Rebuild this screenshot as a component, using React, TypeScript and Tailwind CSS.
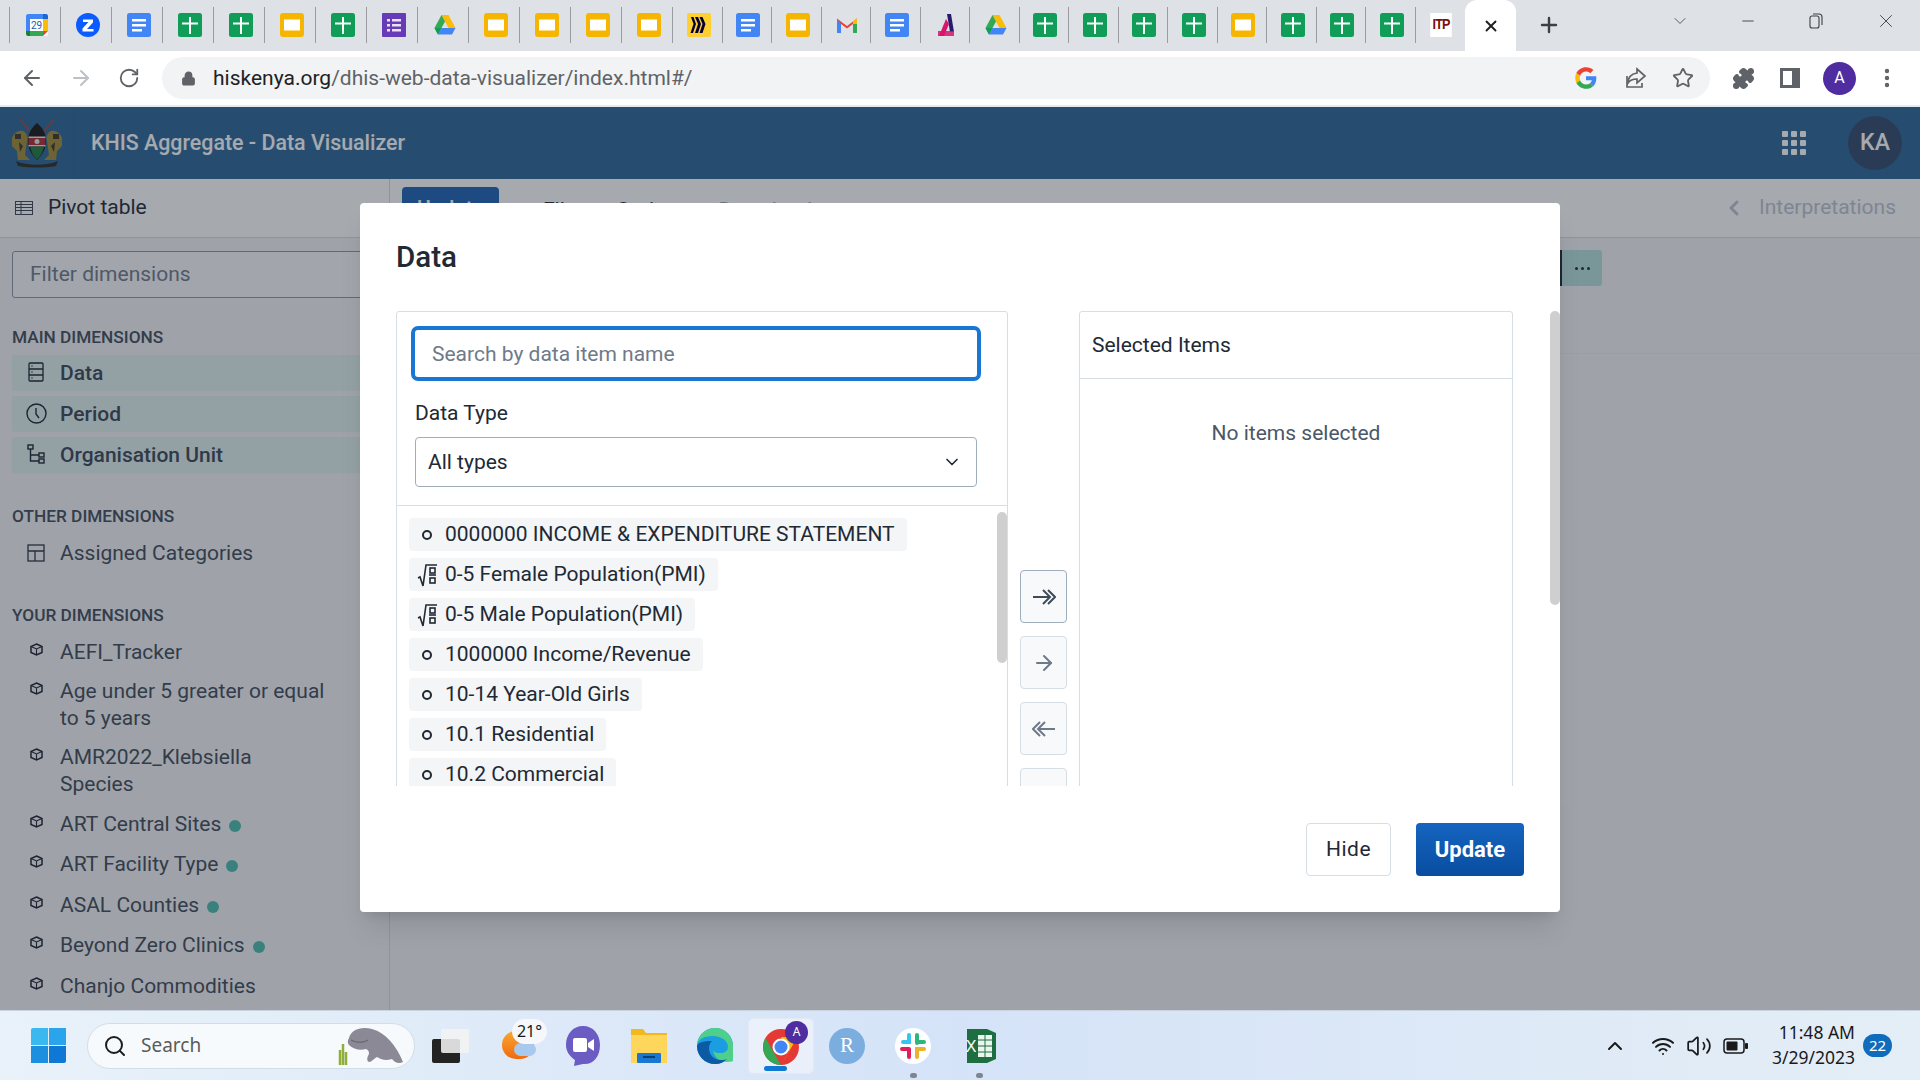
import { ArrowLeft, ArrowRight, RotateCw, Lock, Star, Puzzle, X, Plus, ChevronDown, ChevronUp, ChevronLeft, Minus, Search, MoreVertical, Wifi, Volume2 } from "lucide-react";

type Fav = "cal" | "z" | "doc" | "sheet" | "slide" | "form" | "drive" | "miro" | "gmail" | "lambda" | "itp";

const tabs: Fav[] = [
  "cal", "z", "doc", "sheet", "sheet", "slide", "sheet", "form", "drive", "slide", "slide", "slide", "slide", "miro", "doc",
  "slide", "gmail", "doc", "lambda", "drive", "sheet", "sheet", "sheet", "sheet", "slide", "sheet", "sheet", "sheet", "itp",
];

function Favicon({ kind }: { kind: Fav }) {
  if (kind === "itp") {
    return (
      <div className="w-6 h-6 bg-white flex items-center justify-center font-['Liberation_Sans',sans-serif] text-[14px] font-bold text-[#7a1010] tracking-[-1px] scale-x-90">
        ITP
      </div>
    );
  }
  return (
    <svg width="24" height="24" viewBox="0 0 24 24">
      {kind === "cal" && (
        <>
          <rect x="1" y="1" width="22" height="22" rx="2" fill="#fff" />
          <path d="M1 6V3a2 2 0 0 1 2-2h15v5z" fill="#4285f4" />
          <path d="M18 1h3a2 2 0 0 1 2 2v3h-5z" fill="#1967d2" />
          <path d="M18 6h5v12h-5z" fill="#fbbc04" />
          <path d="M1 6h4v12H1z" fill="#4285f4" />
          <path d="M5 18h13v5H5z" fill="#34a853" />
          <path d="M1 18h4v5H3a2 2 0 0 1-2-2z" fill="#188038" />
          <path d="M18 18h5l-5 5z" fill="#ea4335" />
          <text x="11.5" y="15.5" textAnchor="middle" fontSize="10" fill="#1a5bb8" fontFamily="Roboto, sans-serif">29</text>
        </>
      )}
      {kind === "z" && (
        <>
          <circle cx="12" cy="12" r="12" fill="#0b5cff" />
          <path d="M7 6.5h10v3L11 16h6.5v2.5H6.5v-3L12.5 9H7z" fill="#fff" />
        </>
      )}
      {kind === "doc" && (
        <>
          <rect x="0" y="0" width="24" height="24" rx="2.5" fill="#4285f4" />
          <path d="M5 6h14v2.5H5zM5 11h14v2.5H5zM5 16h10v2.5H5z" fill="#fff" />
        </>
      )}
      {kind === "form" && (
        <>
          <rect x="0" y="0" width="24" height="24" rx="1" fill="#673ab7" />
          <path d="M10 6h9v2.5h-9zM10 11h9v2.5h-9zM10 16h9v2.5h-9zM5 6h3v2.5H5zM5 11h3v2.5H5zM5 16h3v2.5H5z" fill="#e9e1f7" />
        </>
      )}
      {kind === "sheet" && (
        <>
          <rect x="0" y="0" width="24" height="24" rx="2.5" fill="#0f9d58" />
          <path d="M4 9.5h16v2h-7V21h-2v-9.500H4zM11 4h2v6h-2z" fill="#fff" />
        </>
      )}
      {kind === "slide" && (
        <>
          <rect x="0" y="0" width="24" height="24" rx="3" fill="#f6b600" />
          <rect x="4" y="6.5" width="16" height="11" fill="#fff" />
        </>
      )}
      {kind === "drive" && (
        <>
          <path d="M8.5 2h7l7 13h-7z" fill="#fbbc04" />
          <path d="M8.5 2 1.5 15l3.5 6.5L12 8.5z" fill="#34a853" />
          <path d="M5 21.5 8.5 15h14L19 21.5z" fill="#4285f4" />
          <path d="m1.5 15 3.5 6.5L8.5 15z" fill="#0f9d58" />
        </>
      )}
      {kind === "miro" && (
        <>
          <rect x="0" y="0" width="24" height="24" rx="2" fill="#ffd02f" />
          <path d="M8 4h3l3 7-3 9H8l3-9zM12.500 4h3l3 7-3 9h-3l3-9zM4 4h2.500L9 11l-3 9H3.500l3-9z" fill="#050038" />
        </>
      )}
      {kind === "gmail" && (
        <>
          <path d="M2 5.5 12 13 22 5.5V20h-4V11l-6 4.5L6 11v9H2z" fill="#ea4335" />
          <path d="M2 5.5V20h4V11z" fill="#4285f4" />
          <path d="M22 5.5V20h-4V11z" fill="#34a853" />
          <path d="m18 8 4-2.5V11l-4 0z" fill="#fbbc04" />
        </>
      )}
      {kind === "lambda" && (
        <>
          <path d="M13 1h4l3 18h-4z" fill="#2a1a6e" />
          <path d="M12 6 5 23h5l5-12z" fill="#d6156c" />
          <path d="M4 18h16v5H4z" fill="#d6156c" opacity=".85" />
        </>
      )}
    </svg>
  );
}

function GoogleG() {
  return (
    <svg width="22" height="22" viewBox="0 0 48 48">
      <path fill="#ea4335" d="M24 10c3.600 0 6.800 1.300 9.300 3.400l6.900-6.900C36 2.700 30.300.5 24 .5 14.800.5 6.900 5.700 3 13.300l8 6.200C12.900 14 18 10 24 10z" />
      <path fill="#4285f4" d="M46.500 24.500c0-1.600-.1-3.100-.4-4.500H24v9h12.700c-.6 2.900-2.200 5.300-4.700 7l7.700 6c4.400-4.200 6.800-10.300 6.800-17.500z" />
      <path fill="#fbbc05" d="M11 28.500c-.5-1.400-.8-3-.8-4.500s.3-3.100.8-4.500l-8-6.200C1.400 16.500.5 20.100.5 24s.9 7.500 2.500 10.700z" />
      <path fill="#34a853" d="M24 47.500c6.300 0 11.700-2.100 15.700-5.600l-7.700-6c-2.200 1.500-4.900 2.300-8 2.300-6 0-11.100-4-13-9.500l-8 6.200C6.900 42.300 14.800 47.500 24 47.500z" />
    </svg>
  );
}

function BrowserChrome() {
  return (
    <>
      <div className="h-[51px] bg-[#dee1e6] flex items-start pl-[10px] relative">
        {tabs.map((t, i) => (
          <div key={i} className={`h-[51px] flex items-center justify-center shrink-0 pb-[2px] ${i <= 12 ? "w-[51px]" : "w-[49.500px]"}`}>
            <div className="w-[1px] h-[36px] bg-[#9a9ca0] mr-auto -ml-[1px]" />
            <div className="mr-[12px]">
              <Favicon kind={t} />
            </div>
          </div>
        ))}
        <div className="w-[51px] h-[51px] bg-white rounded-t-[12px] flex items-center justify-center shrink-0">
          <X size={18} strokeWidth={2.5} className="text-[#202124]" />
        </div>
        <Plus size={24} strokeWidth={2.4} className="text-[#3c4043] ml-[21px] mt-[13px]" />
        <div className="ml-auto flex items-center h-[42px] text-[#3c4043]">
          <ChevronDown size={20} strokeWidth={1} className="mr-[49px]" />
          <Minus size={18} strokeWidth={1.2} className="mr-[51px]" />
          <svg width="16" height="18" viewBox="0 0 16 18" fill="none" stroke="#3c4043" strokeWidth="1.100" className="mr-[51px]">
            <rect x="2" y="4" width="9" height="12" rx="2" />
            <path d="M5 2h6a3 3 0 0 1 3 3v8" />
          </svg>
          <X size={22} strokeWidth={1} className="mr-[23px]" />
        </div>
      </div>
      <div className="h-[54px] bg-white flex items-center text-[#5f6368]">
        <ArrowLeft size={24} strokeWidth={2} className="ml-[20px]" />
        <ArrowRight size={24} strokeWidth={2} className="ml-[25px] text-[#bdc1c6]" />
        <RotateCw size={22} strokeWidth={2} className="ml-[25px]" />
        <div className="ml-[22px] w-[1548px] h-[42px] rounded-full bg-[#f1f3f4] flex items-center pl-[19px]">
          <Lock size={15} fill="#5f6368" strokeWidth={2.400} />
          <span className="ml-[17px] mt-[2px] text-[21px] text-[#202124]">
            hiskenya.org<span className="text-[#5f6368]">/dhis-web-data-visualizer/index.html#/</span>
          </span>
          <div className="ml-auto flex items-center">
            <GoogleG />
            <svg width="24" height="24" viewBox="0 0 24 24" fill="none" stroke="#5f6368" strokeWidth="1.700" className="ml-[26px]">
              <path d="M4 10v11h15v-4" />
              <path d="M14 3l8 7-8 7v-4c-4 0-7 1-9 4 0-6 3-9 9-10z" />
            </svg>
            <Star size={22} strokeWidth={2} className="ml-[25px] mr-[16px]" />
          </div>
        </div>
        <Puzzle size={23} fill="#5f6368" className="ml-[22px]" />
        <svg width="20" height="20" viewBox="0 0 20 20" className="ml-[25px]">
          <path d="M0 0h20v20H0z" fill="#5f6368" />
          <path d="M3 3h9v14H3z" fill="#fff" />
        </svg>
        <div className="ml-[23px] w-[33px] h-[33px] rounded-full bg-[#4f2da0] text-white text-[16px] flex items-center justify-center">A</div>
        <MoreVertical size={24} strokeWidth={2.4} className="ml-[19px]" />
      </div>
    </>
  );
}

function CoatOfArms() {
  return (
    <svg width="54" height="50" viewBox="0 0 54 50">
      <path d="M10 1 22 16M44 1 32 16" stroke="#a0473a" strokeWidth="1.500" />
      <path d="M2 20c2-5 6-8 11-7 4 2 5 6 4 10l-2 14 5 5H8l-1-9-5-5z" fill="#a08a34" />
      <path d="M52 20c-2-5-6-8-11-7-4 2-5 6-4 10l2 14-5 5h12l1-9 5-5z" fill="#a08a34" />
      <path d="M5 16h6v5H5zM43 16h6v5h-6zM9 24l4 4-3 6zM45 24l-4 4 3 6z" fill="#3c3520" />
      <path d="M27 5c6 5 9 11 9 18 0 8-4 14-9 19-5-5-9-11-9-19 0-7 3-13 9-18z" fill="#141414" />
      <path d="M18.500 20h17v7h-17z" fill="#b02a2e" />
      <path d="M18.500 27h17v1.500h-17zM18.500 18.500h17V20h-17z" fill="#e6e6e6" />
      <circle cx="27" cy="23.500" r="2.500" fill="#e6e6e6" />
      <path d="M20 28.500h14c-1 5-3 9-7 13-4-4-6-8-7-13z" fill="#1f7a3d" />
      <path d="M6 43c11 5 31 5 42 0l-2 5c-11 2-27 2-38 0z" fill="#2c2a1e" />
    </svg>
  );
}

function DataIcon() {
  return (
    <svg width="16" height="20" viewBox="0 0 16 20" fill="none" stroke="#1a2130" strokeWidth="1.300">
      <rect x="1" y="1" width="14" height="18" rx="1" />
      <path d="M1 7h14M1 13h14" />
      <path d="M3.500 4h1M3.500 10h1M3.500 16h1" strokeWidth="1.500" />
    </svg>
  );
}

function ClockIcon() {
  return (
    <svg width="21" height="21" viewBox="0 0 21 21" fill="none" stroke="#1a2130" strokeWidth="1.400">
      <circle cx="10.500" cy="10.500" r="9.500" />
      <path d="M10 5v6l3 4" />
    </svg>
  );
}

function OrgIcon() {
  return (
    <svg width="18" height="20" viewBox="0 0 18 20" fill="none" stroke="#1a2130" strokeWidth="1.400">
      <rect x="1" y="1" width="5" height="4" />
      <rect x="12" y="9" width="5" height="4" />
      <rect x="12" y="15" width="5" height="4" />
      <path d="M3.500 5v12H12M3.500 11H12" />
    </svg>
  );
}

function CategoriesIcon() {
  return (
    <svg width="18" height="18" viewBox="0 0 18 18" fill="none" stroke="#2a3342" strokeWidth="1.300">
      <rect x="1" y="1" width="16" height="16" />
      <path d="M1 7h16M8 7v10" />
    </svg>
  );
}

function CubeIcon() {
  return (
    <svg width="13" height="13" viewBox="0 0 13 13" fill="none" stroke="#1a2130" strokeWidth="1.500">
      <path d="M6.500 1 12 3.500v6L6.500 12 1 9.500v-6z" />
      <path d="M1 3.500 6.500 6 12 3.500M6.500 6v6" strokeWidth="1.100" />
    </svg>
  );
}

const yourDims: { name: string[]; dot?: boolean; tall?: boolean }[] = [
  { name: ["AEFI_Tracker"] },
  { name: ["Age under 5 greater or equal", "to 5 years"] },
  { name: ["AMR2022_Klebsiella", "Species"] },
  { name: ["ART Central Sites"], dot: true, tall: true },
  { name: ["ART Facility Type"], dot: true, tall: true },
  { name: ["ASAL Counties"], dot: true, tall: true },
  { name: ["Beyond Zero Clinics"], dot: true, tall: true },
  { name: ["Chanjo Commodities"], tall: true },
];

function MainRow({ icon, label }: { icon: React.ReactNode; label: string }) {
  return (
    <div className="h-[36px] bg-[#e0f2f1] rounded-[2px] flex items-center mx-3">
      <div className="w-[48px] flex justify-center shrink-0 -mt-[2px]">{icon}</div>
      <span className="text-[21px] mt-[1px] font-medium text-[#3a4554]">{label}</span>
    </div>
  );
}

function Sidebar() {
  return (
    <div className="w-[390px] shrink-0 bg-[#f3f5f7] border-r border-[#d5dde5] h-full">
      <div className="h-[59px] bg-white border-b border-[#d5dde5] flex items-center pl-[15px] relative">
        <svg width="18" height="14" viewBox="0 0 18 14" fill="none" stroke="#3a4554" strokeWidth="1">
          <rect x=".5" y=".5" width="17" height="13" />
          <path d="M.5 3.500h17M.5 6.500h17M.5 9.500h17M6 .5v13" />
        </svg>
        <span className="ml-[15px] text-[21px] text-[#212934]">Pivot table</span>
      </div>
      <div className="mx-3 mt-[13px] h-[47px] border border-[#8b97a6] rounded-[3px] bg-[#f8f9fa] flex items-center pl-[17px] text-[21px] text-[#6e7a8a]">
        Filter dimensions
      </div>
      <div className="mt-[29px] pl-3 h-[20px] leading-[20px] text-[17.250px] font-medium text-[#404b5a]">MAIN DIMENSIONS</div>
      <div className="mt-[8px] flex flex-col gap-[5px]">
        <MainRow icon={<DataIcon />} label="Data" />
        <MainRow icon={<ClockIcon />} label="Period" />
        <MainRow icon={<OrgIcon />} label="Organisation Unit" />
      </div>
      <div className="mt-[33px] pl-3 h-[20px] leading-[20px] text-[17.250px] font-medium text-[#404b5a]">OTHER DIMENSIONS</div>
      <div className="mt-[8px] h-[40px] flex items-center mx-3">
        <div className="w-[48px] flex justify-center shrink-0 -mt-[2px]">
          <CategoriesIcon />
        </div>
        <span className="text-[21px] text-[#404a58]">Assigned Categories</span>
      </div>
      <div className="mt-[31px] pl-3 h-[20px] leading-[20px] text-[17.250px] font-medium text-[#404b5a]">YOUR DIMENSIONS</div>
      <div className="mt-[8px] mx-3">
        {yourDims.map((d) => (
          <div key={d.name[0]} className={`flex ${d.tall ? "py-[6.750px]" : "py-[6px]"}`}>
            <div className="w-[48px] flex justify-center shrink-0 pt-[4px]">
              <CubeIcon />
            </div>
            <div className="text-[21px] leading-[27px] text-[#404a58]">
              {d.name.map((n) => (
                <div key={n}>
                  {n}
                  {d.dot && <span className="inline-block w-3 h-3 rounded-full bg-[#4cbdb0] ml-[8px] align-[-1px]" />}
                </div>
              ))}
            </div>
          </div>
        ))}
      </div>
    </div>
  );
}

function MainArea() {
  return (
    <div className="flex-1 bg-[#f3f5f7] h-full">
      <div className="h-[59px] bg-white border-b border-[#d5dde5] flex relative">
        <div className="ml-[12px] mt-[8px] w-[97px] h-[44px] rounded-[4px] bg-[#1c62b5] text-white text-[21px] font-medium flex items-center justify-center">
          Update
        </div>
        <span className="ml-[44px] mt-[16px] text-[21px] text-[#212934]">File</span>
        <span className="ml-[40px] mt-[16px] text-[21px] text-[#212934]">Options</span>
        <span className="ml-[30px] mt-[16px] text-[21px] text-[#a0a8b4]">Download</span>
        <div className="ml-auto flex items-center text-[#bcc5cf] pr-6">
          <ChevronLeft size={24} strokeWidth={3} />
          <span className="ml-[13px] text-[21px]">Interpretations</span>
        </div>
      </div>
      <div className="h-[116px] bg-[#f3f5f7] border-b border-[#e8edf2] flex justify-end items-start pt-[12px] pr-[318px]">
        <div className="w-[42px] h-[36px] bg-[#b5dfda] rounded-r-[3px] border-l-2 border-[#212934] flex items-center justify-center gap-[3px]">
          <span className="w-[3px] h-[3px] rounded-full bg-[#212934]" />
          <span className="w-[3px] h-[3px] rounded-full bg-[#212934]" />
          <span className="w-[3px] h-[3px] rounded-full bg-[#212934]" />
        </div>
      </div>
      <div className="ml-[50px] mr-[350px] mt-[168px] h-[283px] rounded-[3px] bg-[#f5f6f8]" />
    </div>
  );
}

function DoubleArrow({ left }: { left?: boolean }) {
  return (
    <svg width="24" height="24" viewBox="0 0 24 24" fill="none" stroke="currentColor" strokeWidth="2" className={left ? "rotate-180" : ""}>
      <path d="M1 12h17M11 5l7 7-7 7M16 5l7 7-7 7" />
    </svg>
  );
}

const items: { label: string; calc?: boolean }[] = [
  { label: "0000000 INCOME & EXPENDITURE STATEMENT" },
  { label: "0-5 Female Population(PMI)", calc: true },
  { label: "0-5 Male Population(PMI)", calc: true },
  { label: "1000000 Income/Revenue" },
  { label: "10-14 Year-Old Girls" },
  { label: "10.1 Residential" },
  { label: "10.2 Commercial" },
];

function ItemIcon({ calc }: { calc?: boolean }) {
  if (calc) {
    return (
      <svg width="21" height="24" viewBox="0 0 21 24" fill="none" stroke="#212934" strokeWidth="1.600">
        <path d="M1 15l2-1 3 9L9 2h11" />
        <rect x="13" y="5" width="5" height="5" />
        <path d="M12 12h7" />
        <rect x="13" y="15" width="5" height="5" />
      </svg>
    );
  }
  return <div className="w-[10px] h-[10px] rounded-full border-2 border-[#212934]" />;
}

function DataModal() {
  return (
    <div className="w-[1200px] h-[709px] mb-[2px] bg-white rounded-[4px] relative flex flex-col shadow-xl overflow-hidden">
      <div className="px-[36px] h-[108px] flex items-start pt-[35px]">
        <h1 className="text-[29.500px] leading-[38px] font-medium text-[#212934]">Data</h1>
      </div>
      <div className="ml-[36px] h-[475px] overflow-hidden flex items-start shrink-0">
        <div className="w-[612px] h-[600px] border border-[#d5dde5] rounded-t-[3px] relative">
          <div className="ml-[14px] mt-[14px] w-[570px] h-[55px] border-[4px] border-[#1976d2] rounded-[7px] flex items-center pl-[17px] pt-[2px] text-[21px] text-[#6e7a8a]">
            Search by data item name
          </div>
          <div className="ml-[18px] mt-[18px] h-[28px] leading-[28px] text-[21px] text-[#212934]">Data Type</div>
          <div className="ml-[18px] mt-[10px] w-[562px] h-[50px] border border-[#a0adba] rounded-[4px] flex items-center pl-[12px] pr-[14px] text-[21px] text-[#212934]">
            <span className="mt-[1px]">All types</span>
            <ChevronDown size={20} strokeWidth={2} className="ml-auto" />
          </div>
          <div className="mt-[18px] border-t border-[#d5dde5] pt-[12px] pl-[12px] flex flex-col items-start gap-[7px]">
            {items.map((it) => (
              <div key={it.label} className="h-[33px] bg-[#f3f5f7] rounded-[4px] flex items-center pr-[12px]">
                <div className="w-[36px] flex justify-center shrink-0">
                  <ItemIcon calc={it.calc} />
                </div>
                <span className="text-[21px] mt-[1px] text-[#212934] whitespace-nowrap">{it.label}</span>
              </div>
            ))}
          </div>
          <div className="absolute right-0 top-[200px] w-[10px] h-[151px] rounded-full bg-[#cfcfcf]" />
        </div>
        <div className="w-[47px] ml-[12px] mt-[259px] flex flex-col gap-[13px] shrink-0">
          <div className="h-[53px] rounded-[4px] border border-[#a0adba] bg-[#f8f9fa] flex items-center justify-center text-[#404b5a]">
            <DoubleArrow />
          </div>
          <div className="h-[53px] rounded-[4px] border border-[#d5dde5] bg-[#f8f9fa] flex items-center justify-center text-[#6e7a8a]">
            <ArrowRight size={24} strokeWidth={2} />
          </div>
          <div className="h-[53px] rounded-[4px] border border-[#d5dde5] bg-[#f8f9fa] flex items-center justify-center text-[#6e7a8a]">
            <DoubleArrow left />
          </div>
          <div className="h-[53px] rounded-[4px] border border-[#d5dde5] bg-[#f8f9fa] flex items-center justify-center text-[#6e7a8a]">
            <ArrowLeft size={24} strokeWidth={2} />
          </div>
        </div>
        <div className="w-[434px] h-[600px] ml-[12px] border border-[#d5dde5] rounded-t-[3px] shrink-0">
          <div className="h-[67px] border-b border-[#d5dde5] flex items-center pl-[12px] pt-[1px] text-[21px] text-[#212934]">Selected Items</div>
          <div className="mt-[39px] text-center text-[21px] text-[#4a5768]">No items selected</div>
        </div>
      </div>
      <div className="flex justify-end items-start gap-[25px] pt-[37px] pr-[36px]">
        <div className="w-[85px] h-[53px] rounded-[4px] border border-[#d5dde5] flex items-center justify-center text-[21px] text-[#212934] tracking-[0.5px]">
          Hide
        </div>
        <div className="w-[108px] h-[53px] rounded-[4px] bg-gradient-to-b from-[#1565c0] to-[#094da0] flex items-center justify-center text-[22px] font-bold text-white">
          Update
        </div>
      </div>
      <div className="absolute right-0 top-[108px] w-[10px] h-[294px] rounded-full bg-[#cfcfcf]" />
    </div>
  );
}

function Taskbar() {
  return (
    <div className="h-[70px] bg-gradient-to-r from-[#e9f2f9] via-[#d5e3f8] to-[#e4eef6] flex items-center font-['Noto_Sans',sans-serif] border-t border-[#c9d3de] relative">
      <div className="ml-[31px] w-[35px] h-[35px] grid grid-cols-2 grid-rows-2 gap-[1.500px]">
        <div className="bg-[#3ab8f0] rounded-tl-[2px]" />
        <div className="bg-[#2aa4ea]" />
        <div className="bg-[#1c8fe0]" />
        <div className="bg-[#0f78d4] rounded-br-[2px]" />
      </div>
      <div className="ml-[21px] w-[328px] h-[46px] rounded-full bg-[#f6fafd] border border-[#d3dde8] flex items-center pl-[15px] relative">
        <Search size={24} strokeWidth={2} className="text-[#1d1d1d]" />
        <span className="ml-[14px] text-[19px] text-[#5a5a5a]">Search</span>
        <svg width="68" height="40" viewBox="0 0 68 40" className="ml-auto mr-[8px] mt-[1px]">
          <path d="M2 39V24M5 39V18M8 39V26" stroke="#8fae3a" strokeWidth="2.500" />
          <path d="M11 12C13 3 24 0 34 3c14 4 24 16 31 33-4 2-8 1-11-3-6 2-10 1-15-2-3 2-4 3-7 5-4 0-3-5-1-8 0-3-1-4-3-5-6 2-13 0-17-4-2-3-1-5 0-7z" fill="#8c8996" />
          <path d="M13 14c6 3 12 3 17 0" stroke="#5f5c68" strokeWidth="1" fill="none" />
        </svg>
      </div>
      <div className="ml-[3px] flex">
        <div className="w-[66px] h-[56px] flex items-center justify-center">
          <svg width="38" height="34" viewBox="0 0 38 34">
            <rect x="0" y="10" width="28" height="24" rx="2" fill="#232323" />
            <rect x="9" y="0" width="28" height="24" rx="2" fill="#f2f2f2" opacity=".88" />
          </svg>
        </div>
        <div className="w-[66px] h-[56px] relative">
          <div className="absolute left-[18px] top-[13px] w-[32px] h-[28px] rounded-full bg-gradient-to-b from-[#f9a72c] to-[#ef6a10]" />
          <div className="absolute left-[30px] top-[25px] w-[22px] h-[13px] rounded-full bg-[#a7c9ee]" />
          <div className="absolute left-[28px] top-[1px] w-[35px] h-[25px] rounded-full bg-[#f5f7fa] flex items-center justify-center text-[16px] text-[#1a1a1a]">21°</div>
        </div>
        <div className="w-[66px] h-[56px] flex items-center justify-center">
          <svg width="36" height="40" viewBox="0 0 36 40">
            <path d="M18 0c10 0 17 8 17 19 0 12-7 20-17 19l-9 2 1-6C4 30 1 25 1 19 1 8 8 0 18 0z" fill="#6b5cc4" />
            <rect x="8" y="12" width="14" height="14" rx="2" fill="#fff" />
            <path d="m23 17 6-4v12l-6-4z" fill="#fff" />
          </svg>
        </div>
        <div className="w-[66px] h-[56px] flex items-center justify-center">
          <svg width="36" height="34" viewBox="0 0 36 34">
            <path d="M0 0h12l3 4h21v30H0z" fill="#f3b81c" />
            <path d="M0 6h36v28H0z" fill="#ffd65c" />
            <rect x="6" y="24" width="24" height="10" rx="1" fill="#1b78d0" />
            <path d="M12 28h12" stroke="#0b3f78" strokeWidth="2" />
          </svg>
        </div>
        <div className="w-[66px] h-[56px] flex items-center justify-center">
          <svg width="36" height="36" viewBox="0 0 36 36">
            <circle cx="18" cy="18" r="18" fill="#1b9de2" />
            <path d="M36 18a18 18 0 0 0-36 0c0-6 7-10 15-10 10 0 16 5 16 11 0 3-2 5-5 6h-4c-4 0-6-2-6-4 0 7 6 13 14 13 4 0 6-1 6-1" fill="#4fd08a" />
            <path d="M0 18c0 10 8 18 18 18 5 0 9-2 12-5-2 1-4 1-6 1-8 0-12-6-12-12 0-3 1-5 3-7-9 0-15 2-15 5z" fill="#0c59a4" />
          </svg>
        </div>
        <div className="w-[66px] h-[56px] flex items-center justify-center relative rounded-[5px] bg-[#f1f5fb]/70 border border-[#e3e9f2]">
          <svg width="36" height="36" viewBox="0 0 36 36" className="mt-[2px]">
            <circle cx="18" cy="18" r="18" fill="#e53935" />
            <path d="M2.500 9 18 36a18 18 0 0 1-15.500-27z" fill="#34a853" />
            <path d="M18 36 34 9a18 18 0 0 0-1-1H18l8 14z" fill="#fbbc04" />
            <circle cx="18" cy="18" r="8.500" fill="#fff" />
            <circle cx="18" cy="18" r="6.500" fill="#4285f4" />
          </svg>
          <div className="absolute right-[5px] top-[2px] w-[23px] h-[23px] rounded-full bg-[#4f2da0] text-white text-[12px] flex items-center justify-center">A</div>
          <div className="absolute bottom-[2px] left-[15px] w-[23px] h-[5px] rounded-full bg-[#0f78d4]" />
        </div>
        <div className="w-[66px] h-[56px] flex items-center justify-center">
          <div className="w-[36px] h-[36px] rounded-full bg-[#7badde] text-white font-['Liberation_Serif',serif] text-[21px] flex items-center justify-center">R</div>
        </div>
        <div className="w-[66px] h-[56px] flex items-center justify-center relative">
          <svg width="36" height="36" viewBox="0 0 36 36">
            <circle cx="18" cy="18" r="18" fill="#fff" />
            <path d="M14 7v7H8" stroke="#36c5f0" strokeWidth="4" strokeLinecap="round" fill="none" />
            <path d="M22 7v8M29 14h-6" stroke="#2eb67d" strokeWidth="4" strokeLinecap="round" />
            <path d="M22 29v-8h7" stroke="#ecb22e" strokeWidth="4" strokeLinecap="round" fill="none" />
            <path d="M14 29v-8M7 21h7" stroke="#e01e5a" strokeWidth="4" strokeLinecap="round" />
          </svg>
          <div className="absolute bottom-[-4px] left-[30px] w-[7px] h-[5px] rounded-full bg-[#7d8590]" />
        </div>
        <div className="w-[66px] h-[56px] flex items-center justify-center relative">
          <svg width="34" height="34" viewBox="0 0 34 34">
            <path d="M5 0h20l9 4v26l-9 4H5z" fill="#1d6f42" />
            <rect x="16" y="6" width="14" height="22" fill="#eaf5ee" />
            <path d="M16 11h14M16 17h14M16 23h14M23 6v22" stroke="#1d6f42" strokeWidth="1" />
            <text x="9" y="23" textAnchor="middle" fontSize="16" fill="#fff" fontFamily="Liberation Sans, sans-serif">X</text>
          </svg>
          <div className="absolute bottom-[-4px] left-[30px] w-[7px] h-[5px] rounded-full bg-[#7d8590]" />
        </div>
      </div>
      <div className="ml-auto flex items-center text-[#1a1a1a]">
        <ChevronUp size={24} strokeWidth={2} />
        <Wifi size={24} strokeWidth={2} className="ml-[24px]" />
        <Volume2 size={26} strokeWidth={1.600} className="ml-[11px]" />
        <svg width="26" height="16" viewBox="0 0 26 16" fill="none" className="ml-[11px]">
          <rect x="1" y="1" width="20" height="14" rx="3" stroke="#1a1a1a" strokeWidth="1.500" />
          <rect x="3.500" y="3.500" width="11" height="9" rx="1" fill="#1a1a1a" />
          <rect x="22" y="5" width="3" height="6" rx="1" fill="#1a1a1a" />
        </svg>
        <div className="ml-[23px] text-right text-[17.500px] leading-[25px] -mt-[1px]">
          <div>11:48 AM</div>
          <div>3/29/2023</div>
        </div>
        <div className="ml-[8px] mr-[28px] w-[29px] h-[23px] rounded-full bg-[#0f6cbd] text-white text-[15px] flex items-center justify-center">22</div>
      </div>
    </div>
  );
}

export default function App() {
  return (
    <div className="w-[1920px] h-[1080px] overflow-hidden flex flex-col bg-white font-[Roboto,sans-serif]">
      <BrowserChrome />
      <div className="relative flex-1 min-h-0 overflow-hidden flex flex-col border-t-2 border-[#e8eaed]">
        <div className="h-[72px] shrink-0 bg-[#2b6798] flex items-center text-white">
          <div className="w-[74px] h-full border-r border-[#2a6290] flex items-center justify-center">
            <CoatOfArms />
          </div>
          <span className="ml-[17px] mt-[1px] text-[21.400px] font-medium">KHIS Aggregate - Data Visualizer</span>
          <div className="ml-auto grid grid-cols-3 gap-[3px] mr-[42px]">
            {Array.from({ length: 9 }).map((_, i) => (
              <div key={i} className="w-[6px] h-[6px] rounded-[1px] bg-white" />
            ))}
          </div>
          <div className="w-[54px] h-[54px] rounded-full bg-[#314a6b] flex items-center justify-center text-[23px] font-medium mr-[18px]">KA</div>
        </div>
        <div className="flex flex-1 min-h-0">
          <Sidebar />
          <MainArea />
        </div>
        <div className="absolute inset-0 bg-[#212934]/40 flex items-center justify-center">
          <DataModal />
        </div>
      </div>
      <Taskbar />
    </div>
  );
}
